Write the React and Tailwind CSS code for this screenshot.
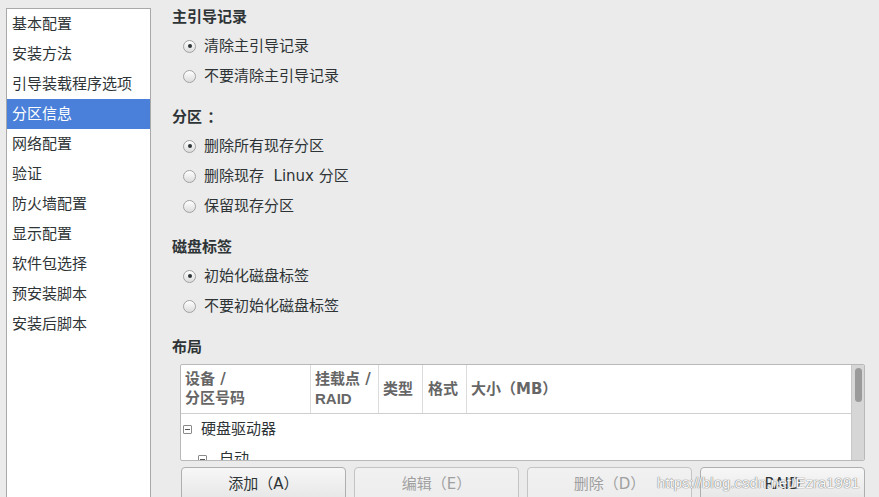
const NAV = [
  '基本配置',
  '安装方法',
  '引导装载程序选项',
  '分区信息',
  '网络配置',
  '验证',
  '防火墙配置',
  '显示配置',
  '软件包选择',
  '预安装脚本',
  '安装后脚本',
];

const SECTIONS = [
  { title: '主引导记录', options: ['清除主引导记录', '不要清除主引导记录'], checked: 0 },
  { title: '分区 ：', options: ['删除所有现存分区', '删除现存  Linux 分区', '保留现存分区'], checked: 0 },
  { title: '磁盘标签', options: ['初始化磁盘标签', '不要初始化磁盘标签'], checked: 0 },
];

function Radio({ checked }) {
  return (
    <span className="w-[13px] h-[13px] rounded-full border border-[#a2a2a2] bg-gradient-to-b from-[#ffffff] to-[#dcdcdc] flex items-center justify-center shrink-0">
      {checked && <span className="w-[4px] h-[4px] rounded-full bg-[#2e3436]" />}
    </span>
  );
}

function Expander() {
  return (
    <span className="w-[9px] h-[9px] border border-[#8a8a8a] rounded-[1px] flex items-center justify-center shrink-0">
      <span className="w-[5px] h-px bg-[#555]" />
    </span>
  );
}

function Button({ label, disabled }) {
  return (
    <div
      className={`w-[165px] h-[40px] shrink-0 pt-[7px] rounded-[4px] border flex justify-center text-[15px] leading-[18px] bg-gradient-to-b ${
        disabled
          ? 'border-[#c4c4c4] from-[#f1f1f1] to-[#ececec] text-[#a0a0a0]'
          : 'border-[#afafaf] from-[#f7f7f7] to-[#e3e3e3] text-[#2e3436]'
      }`}
    >
      {label}
    </div>
  );
}

export default function App() {
  return (
    <div
      className="relative w-[879px] h-[497px] overflow-hidden bg-[#ebebeb] flex text-[#2e3436]"
      style={{ fontFamily: '"DejaVu Sans", "Noto Sans CJK SC", sans-serif' }}
    >
      {/* left nav */}
      <div className="ml-[6px] mt-[8px] w-[145px] bg-white border border-b-0 border-[#a9a9a9] text-[15px]">
        {NAV.map((n, i) => (
          <div
            key={n}
            className={`h-[30px] pl-[5px] flex items-center whitespace-nowrap ${
              i === 3 ? 'bg-[#4a80d9] text-white' : ''
            }`}
          >
            {n}
          </div>
        ))}
      </div>

      {/* main */}
      <div className="ml-[21px] w-[693px] pt-[3px] flex flex-col">
        {SECTIONS.map((s, si) => (
          <div key={s.title} className={`shrink-0 ${si > 0 ? 'mt-[12px]' : ''}`}>
            <div className="h-[28px] flex items-center font-bold text-[15px] whitespace-pre">{s.title}</div>
            {s.options.map((o, i) => (
              <div key={o} className="h-[30px] pl-[11px] flex items-center gap-[8px] text-[15px] whitespace-pre">
                <Radio checked={i === s.checked} />
                <span>{o}</span>
              </div>
            ))}
          </div>
        ))}

        <div className="mt-[12px] h-[28px] shrink-0 flex items-center font-bold text-[15px]">布局</div>

        {/* table */}
        <div className="mt-[3px] ml-[8px] h-[97px] shrink-0 bg-white border border-[#b9b9b9] rounded-[2px] flex overflow-hidden">
          <div className="flex-1 flex flex-col">
            <div className="h-[49px] shrink-0 border-b border-[#cfcfcf] flex text-[15px] font-bold text-[#666] leading-[19px]">
              <div className="w-[130px] px-[4px] flex flex-col justify-center border-r border-[#dcdcdc]">
                <span>设备 /</span>
                <span>分区号码</span>
              </div>
              <div className="w-[68px] px-[4px] flex flex-col justify-center border-r border-[#dcdcdc]">
                <span>挂载点 /</span>
                <span style={{ fontFamily: '"Liberation Sans", sans-serif' }}>RAID</span>
              </div>
              <div className="w-[44px] px-[4px] flex items-center border-r border-[#dcdcdc]">类型</div>
              <div className="w-[44px] px-[5px] flex items-center border-r border-[#dcdcdc]">格式</div>
              <div className="flex-1 px-[4px] flex items-center">大小（MB）</div>
            </div>
            <div className="h-[30px] shrink-0 flex items-center pl-[2px] gap-[9px] text-[15px]">
              <Expander />
              <span>硬盘驱动器</span>
            </div>
            <div className="h-[30px] shrink-0 flex items-center pl-[17px] gap-[12px] text-[15px]">
              <Expander />
              <span>自动</span>
            </div>
          </div>
          <div className="w-[13px] bg-[#d6d6d6] border-l border-[#c8c8c8] pt-[3px] flex justify-center">
            <div className="w-[7px] h-[34px] rounded-full bg-[#9a9a9a]" />
          </div>
        </div>

        {/* buttons */}
        <div className="mt-[6px] ml-[9px] shrink-0 flex gap-[8px]">
          <Button label="添加（A）" />
          <Button label="编辑（E）" disabled />
          <Button label="删除（D）" disabled />
          <Button label="RAID" />
        </div>
      </div>

      <div
        className="absolute left-[657px] top-[474px] text-[15px] leading-[18px] text-[#f7f7f7] [text-shadow:0_0_1px_#777,0_0_1px_#777] whitespace-nowrap pointer-events-none"
        style={{ fontFamily: '"Liberation Sans", sans-serif' }}
      >
        https://blog.csdn.net/Ezra1991
      </div>
    </div>
  );
}
